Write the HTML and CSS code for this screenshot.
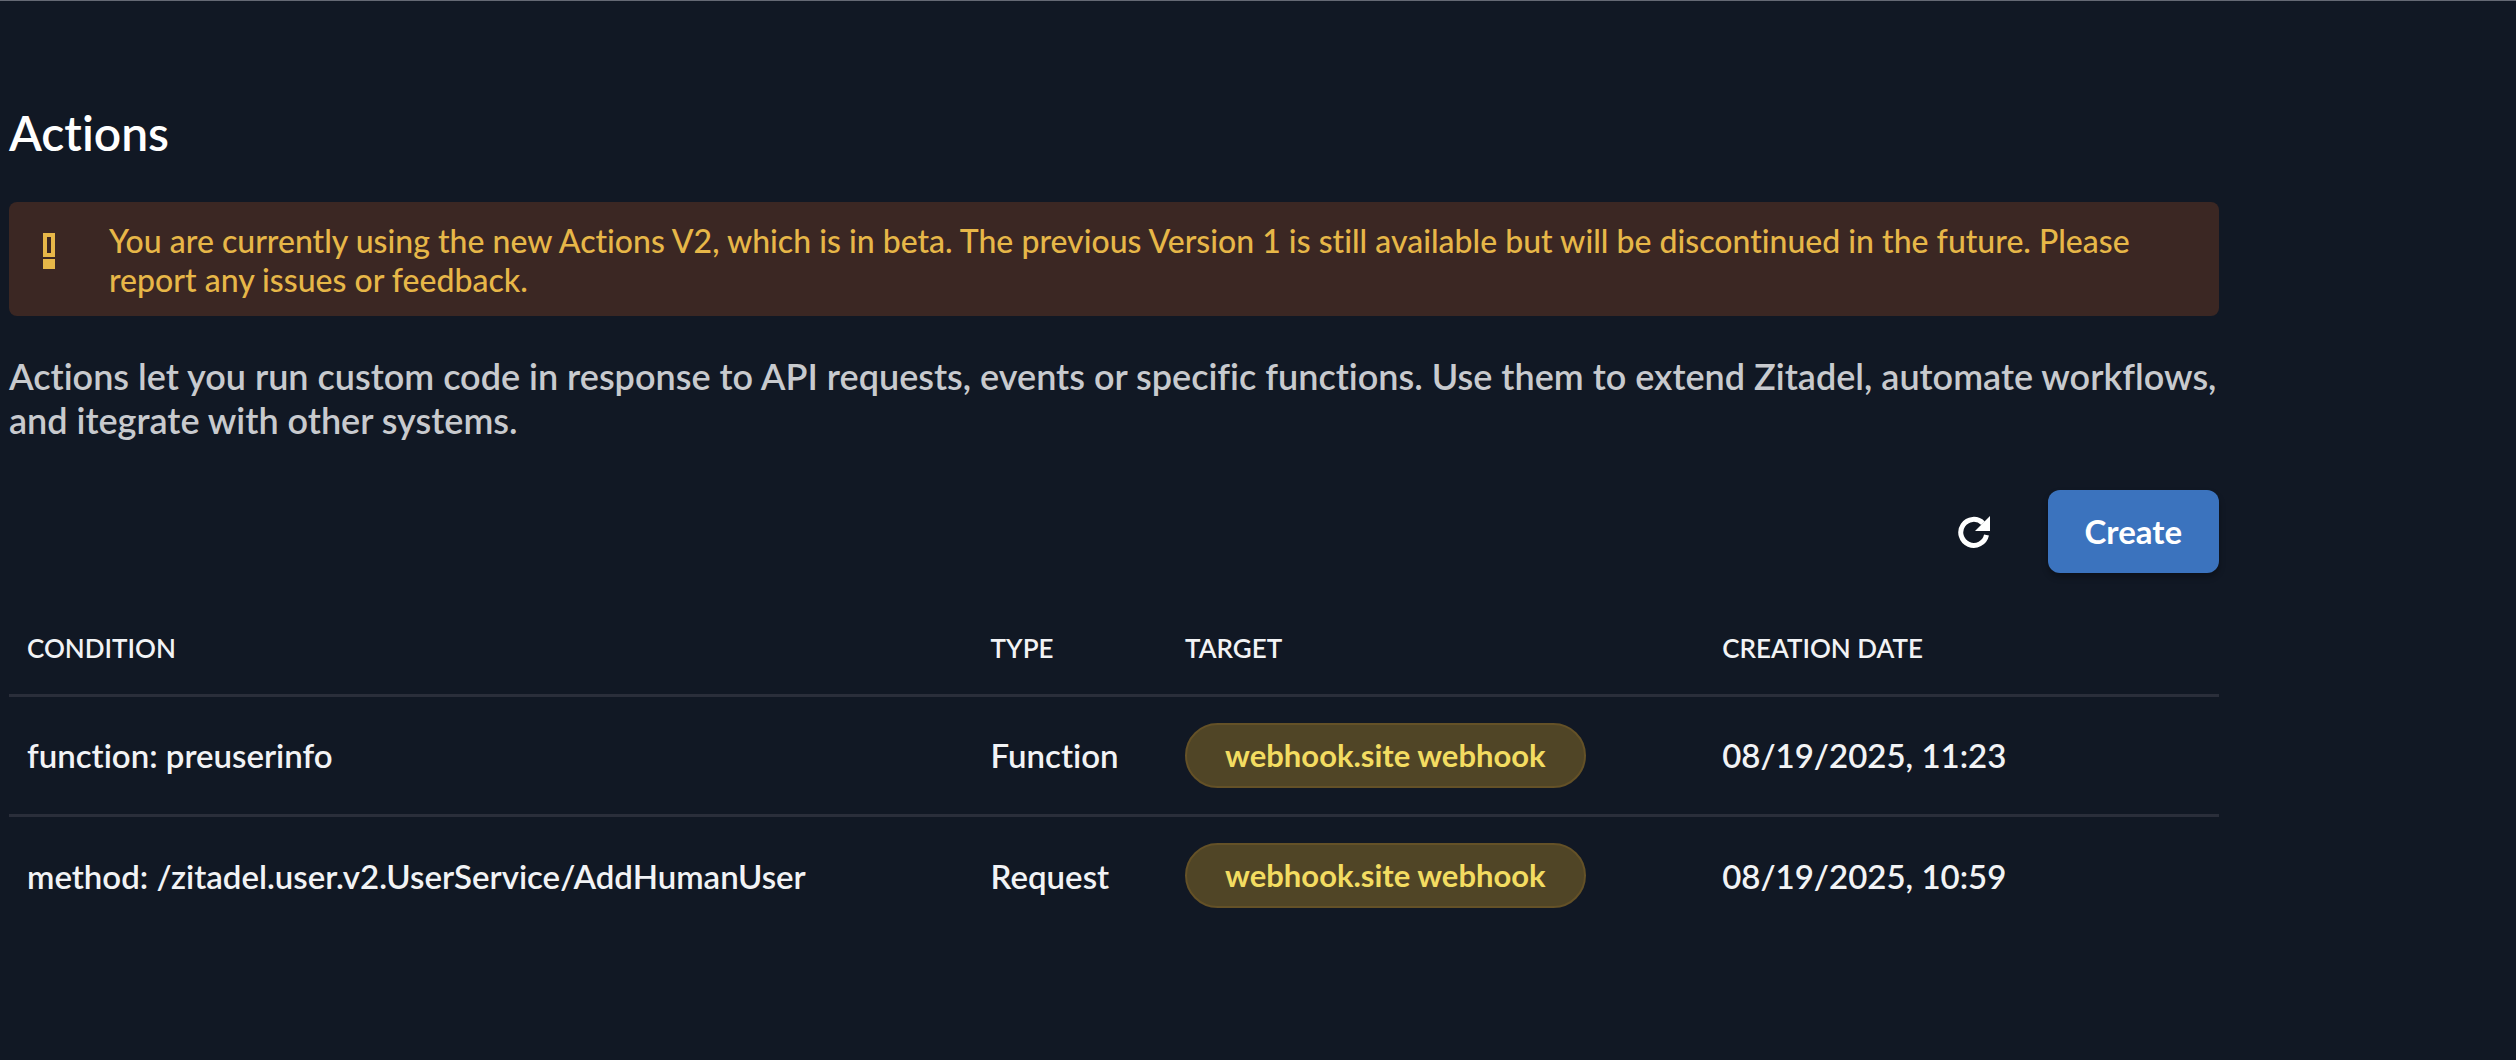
FILE: index.html
```html
<!DOCTYPE html>
<html lang="en">
<head>
<meta charset="utf-8">
<meta name="viewport" content="width=device-width, initial-scale=1">
<title>Actions</title>
<link rel="stylesheet" href="styles.css">
</head>
<body>
<main class="page">
  <h1 class="title">Actions</h1>
  <div class="alert" role="alert">
    <svg class="alert-icon" viewBox="0 0 12 36" aria-hidden="true">
      <path d="M2 2h8v20H2zM2 28h8v6H2z" fill="none" stroke="currentColor" stroke-width="4"/>
      <path d="M2 28h8v6H2z" fill="currentColor"/>
    </svg>
    <p class="alert-text">You are currently using the new Actions V2, which is in beta. The previous Version 1 is still available but will be discontinued in the future. Please report any issues or feedback.</p>
  </div>
  <p class="description">Actions let you run custom code in response to API requests, events or specific functions. Use them to extend Zitadel, automate workflows, and itegrate with other systems.</p>
  <div class="toolbar">
    <button class="refresh" type="button" aria-label="Refresh">
      <svg class="refresh-icon" viewBox="0 0 32 32" aria-hidden="true">
        <path d="M28.500 19A13 13 0 1 1 25 7.200" fill="none" stroke="currentColor" stroke-width="5"/>
        <path d="M32 0v15H17z" fill="currentColor"/>
      </svg>
    </button>
    <button class="create" type="button">Create</button>
  </div>
  <table class="table">
    <colgroup>
      <col class="col-condition"><col class="col-type"><col class="col-target"><col class="col-date">
    </colgroup>
    <thead>
      <tr><th scope="col">CONDITION</th><th scope="col">TYPE</th><th scope="col">TARGET</th><th scope="col">CREATION DATE</th></tr>
    </thead>
    <tbody>
      <tr><td>function: preuserinfo</td><td>Function</td><td><span class="chip">webhook.site webhook</span></td><td>08/19/2025, 11:23</td></tr>
      <tr><td>method: /zitadel.user.v2.UserService/AddHumanUser</td><td>Request</td><td><span class="chip">webhook.site webhook</span></td><td>08/19/2025, 10:59</td></tr>
    </tbody>
  </table>
</main>
</body>
</html>
```
FILE: styles.css
```css
* {
  box-sizing: border-box;
}

body {
  margin: 0;
  min-height: 100vh;
  border-top: 1px solid #656974;
  background: #111824;
  color: #f2f3f5;
  font-family: Lato, "Liberation Sans", sans-serif;
  font-size: 33px;
  font-weight: 600;
  font-variant-ligatures: none;
}

.page {
  width: 88.2%;
  padding: 102px 0 64px 9px;
}

.title {
  margin: 0 0 39px;
  color: #fff;
  font-size: 48px;
  font-weight: 600;
  line-height: 60px;
}

.alert {
  display: flex;
  align-items: flex-start;
  gap: 54px;
  padding: 19px 34px 17px;
  border-radius: 8px;
  background: #3b2723;
  color: #e7b748;
}

.alert-icon {
  flex: none;
  width: 12px;
  height: 36px;
  margin-top: 12px;
}

.alert-text {
  margin: 0;
  font-size: 32px;
  font-weight: 500;
  line-height: 39px;
}

.description {
  margin: 38px 0 48px;
  color: #c8cace;
  font-size: 36px;
  font-weight: 600;
  line-height: 44px;
}

.toolbar {
  display: flex;
  align-items: center;
  justify-content: flex-end;
  gap: 42px;
}

.toolbar button {
  border: 0;
  color: #fff;
  font: inherit;
}

.refresh {
  display: flex;
  padding: 16px;
  background: none;
}

.refresh-icon {
  width: 32px;
  height: 32px;
}

.toolbar .create {
  padding: 0 37px;
  border-radius: 12px;
  background: #3b73be;
  box-shadow: 0 4px 6px rgba(0, 0, 0, 0.3);
  font-weight: 700;
  line-height: 83px;
}

.table {
  width: 100%;
  margin-top: 29px;
  border-collapse: collapse;
  table-layout: fixed;
}

.table th,
.table td {
  padding: 0 0 0 18px;
  text-align: left;
  white-space: nowrap;
}

.table th {
  height: 93px;
  font-size: 26px;
  font-weight: 600;
}

.table td {
  height: 120px;
}

.table tbody tr {
  border-top: 3px solid #2a2e3a;
}

.col-condition {
  width: 43.6%;
}

.col-type {
  width: 8.8%;
}

.col-target {
  width: 24.3%;
}

.chip {
  display: inline-block;
  padding: 0 38px;
  border: 2px solid #645127;
  border-radius: 33px;
  background: #504526;
  color: #f3dc61;
  font-size: 31px;
  font-weight: 700;
  line-height: 61px;
  vertical-align: middle;
}
```
